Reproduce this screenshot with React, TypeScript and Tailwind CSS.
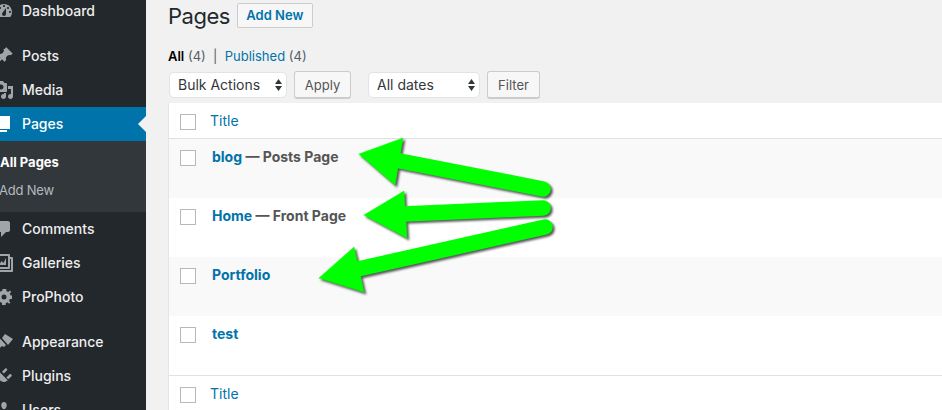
const font = "font-['Inter','Liberation_Sans',sans-serif]";

const Ico = ({ children }: { children: React.ReactNode }) => (
  <svg width="20" height="20" viewBox="0 0 20 20" className="absolute left-[-6px] top-1/2 -translate-y-1/2 fill-[#a0a5aa]">
    {children}
  </svg>
);

const icons: Record<string, React.ReactNode> = {
  Dashboard: <path fillRule="evenodd" d="M3.760 16h12.480c1.100-1.370 1.760-3.110 1.760-5 0-4.420-3.580-8-8-8s-8 3.580-8 8c0 1.890.660 3.630 1.760 5zM10 4c.550 0 1 .450 1 1s-.450 1-1 1-1-.450-1-1 .450-1 1-1zM6 6c.550 0 1 .450 1 1s-.450 1-1 1-1-.450-1-1 .450-1 1-1zm8 0c.550 0 1 .450 1 1s-.450 1-1 1-1-.450-1-1 .450-1 1-1zm-5.370 5.550L12 7v6c0 1.100-.900 2-2 2s-2-.900-2-2c0-.570.250-1.080.630-1.450zM4 10c.550 0 1 .450 1 1s-.450 1-1 1-1-.450-1-1 .450-1 1-1zm12 0c.550 0 1 .450 1 1s-.450 1-1 1-1-.450-1-1 .450-1 1-1z" />,
  Posts: <path d="M10.440 3.020l1.820-1.820 6.360 6.350-1.830 1.820c-1.050-.680-2.480-.570-3.410.360l-.750.750c-.920.930-1.040 2.350-.350 3.400l-1.830 1.820-2.410-2.410-2.800 2.790c-.420.420-3.380 2.710-3.800 2.290s1.860-3.390 2.280-3.810l2.790-2.790L3.100 9.360l1.830-1.820c1.050.690 2.480.570 3.400-.360l.750-.750c.930-.920 1.050-2.350.360-3.410z" />,
  Media: <path fillRule="evenodd" d="M13 11V4c0-.550-.450-1-1-1h-1.670L9 1H5L3.670 3H2c-.550 0-1 .450-1 1v7c0 .550.450 1 1 1h10c.550 0 1-.450 1-1zM7 4.500c1.380 0 2.500 1.120 2.500 2.500S8.380 9.500 7 9.500 4.500 8.380 4.500 7 5.620 4.500 7 4.500zM14 6h5v10.500c0 1.380-1.120 2.500-2.500 2.500S14 17.880 14 16.500s1.120-2.500 2.500-2.500c.170 0 .340.020.500.050V9h-3V6zm-4 8.050V13h2v3.500c0 1.380-1.120 2.500-2.500 2.500S7 17.880 7 16.500 8.120 14 9.500 14c.170 0 .340.020.500.050z" />,
  Pages: <path fill="#fff" d="M6 15V2h10v13H6zm-1 1h8v2H3V5h2v11z" />,
  Comments: <path d="M5 2h9c1.100 0 2 .900 2 2v7c0 1.100-.900 2-2 2h-2l-5 5v-5H5c-1.100 0-2-.900-2-2V4c0-1.100.900-2 2-2z" />,
  Galleries: <path fillRule="evenodd" d="M16 4h1.960c.570 0 1.040.470 1.040 1.040v12.920c0 .570-.470 1.040-1.040 1.040H5.040C4.470 19 4 18.530 4 17.960V16H2.040C1.470 16 1 15.530 1 14.960V2.040C1 1.470 1.470 1 2.040 1h12.920c.570 0 1.040.470 1.040 1.040V4zM3 14h11V3H3v11zm14 3V6h-1v8.960c0 .570-.470 1.040-1.040 1.040H6v1h11zM5 12l2.500-4 2 2L12 5v7z" />,
  ProPhoto: <path fillRule="evenodd" d="M18 12h-2.180c-.170.700-.470 1.350-.870 1.920l1.540 1.540-1.410 1.410-1.540-1.540c-.570.400-1.220.700-1.920.870V18H8v-2.180c-.700-.170-1.350-.470-1.920-.870l-1.540 1.540-1.410-1.410 1.540-1.540c-.400-.570-.700-1.220-.870-1.920H2V8h2.180c.170-.700.470-1.350.870-1.920L3.510 4.540l1.410-1.410 1.540 1.540c.570-.400 1.220-.700 1.920-.870V2h4v2.180c.700.170 1.350.470 1.920.870l1.540-1.540 1.410 1.410-1.540 1.540c.400.570.700 1.220.870 1.920H18v4zM10 7.500a2.500 2.500 0 1 0 0 5 2.500 2.500 0 0 0 0-5z" />,
  Appearance: <path d="M11 2l8 5-5 6-6-7zM6.500 7L12 13l-2 2-2-1-3 2.500-3-2 2-3-1-2z" />,
  Plugins: <path d="M13.110 4.360L9.870 7.600 8 5.730l3.240-3.240c.350-.340 1.050-.250 1.540.240.490.500.580 1.190.330 1.630zM5.870 6.260l7.870 7.870c-1.250 1.170-3.030 2.090-4.240 1.870-1.200-.230-2.180-.510-3.170-1.500L4 17l-1.500-1.500 2.500-2.500c-1-1-1.270-1.970-1.500-3.170-.220-1.210.200-2.400 1.870-3.570zM17.510 10.130l-3.240 3.240-1.870-1.870 3.240-3.240c.440-.250 1.130-.160 1.630.330.490.490.580 1.190.240 1.540z" />,
  Users: <path d="M10 9.250c-2.270 0-2.730-3.440-2.730-3.440C7 4.020 7.820 2 9.970 2c2.160 0 2.980 2.020 2.710 3.810 0 0-.410 3.440-2.680 3.440zm0 2.570L12.720 10c2.390 0 4.520 2.330 4.520 4.530v2.490s-3.650 1.130-7.240 1.130c-3.650 0-7.240-1.130-7.240-1.130v-2.490c0-2.250 1.940-4.530 4.430-4.530z" />,
};

function MenuItem({ label, active }: { label: string; active?: boolean }) {
  return (
    <div className={`relative h-[34px] pl-[22px] pb-[2px] flex items-center text-[14px] font-medium ${active ? "bg-[#0073aa] text-white" : "text-[#eeeeee]"}`}>
      <Ico>{icons[label]}</Ico>
      {label}
      {active && (
        <div className="absolute right-0 top-[9px] border-y-[8px] border-r-[8px] border-y-transparent border-r-[#f1f1f1]" />
      )}
    </div>
  );
}

function Sidebar() {
  return (
    <aside className="w-[146px] h-[410px] shrink-0 bg-[#23282d] overflow-hidden">
      <div className="-mt-[6px]">
        <MenuItem label="Dashboard" />
      </div>
      <div className="mt-[11px]">
        <MenuItem label="Posts" />
        <MenuItem label="Media" />
        <MenuItem label="Pages" active />
      </div>
      <div className="bg-[#32373c] h-[71px] pt-[8px] text-[13px]">
        <div className="h-[28px] flex items-center font-bold text-white">All Pages</div>
        <div className="h-[28px] flex items-center text-[#b4b9be] tracking-[-0.2px] -ml-px">Add New</div>
      </div>
      <div>
        <MenuItem label="Comments" />
        <MenuItem label="Galleries" />
        <MenuItem label="ProPhoto" />
      </div>
      <div className="mt-[11px]">
        <MenuItem label="Appearance" />
        <MenuItem label="Plugins" />
        <MenuItem label="Users" />
      </div>
    </aside>
  );
}

const Check = () => <span className="block w-4 h-4 mt-px bg-white border border-[#b4b9be] shrink-0" />;

function Select({ label, w }: { label: string; w: string }) {
  return (
    <div className={`${w} mt-px h-[26px] bg-white border border-[#e3e3e3] rounded-[5px] flex items-center justify-between pl-2 pr-[4px] pb-px text-[14px] text-[#32373c]`}>
      {label}
      <svg width="7" height="12" viewBox="0 0 7 12" className="fill-[#32373c]">
        <path d="M3.500 0L7 5H0zM3.500 12L0 7h7z" />
      </svg>
    </div>
  );
}

const Btn = ({ children, w }: { children: string; w: string }) => (
  <div className={`${w} h-[28px] pt-[2px] bg-[#f7f7f7] border border-[#cccccc] border-b-2 rounded-[3px] flex items-center justify-center text-[13px] text-[#555555]`}>
    {children}
  </div>
);

function Row({ striped, title, state }: { striped?: boolean; title: string; state?: string }) {
  return (
    <div className={`h-[59px] flex items-start pl-[11px] pt-[10px] ${striped ? "bg-[#f9f9f9]" : "bg-white"}`}>
      <Check />
      <div className="ml-[16px] text-[14px] font-bold leading-[16px] text-[#0073aa]">
        {title}
        {state && <span className="text-[#555555]"> — {state}</span>}
      </div>
    </div>
  );
}

const TitleCell = () => (
  <>
    <Check />
    <span className="ml-[14px] text-[14px] leading-[16px] text-[#0073aa]">Title</span>
  </>
);

function Arrows() {
  // the three hand drawn green arrows on top of the table
  return (
    <svg width="942" height="410" viewBox="0 0 942 410" className="absolute inset-0 pointer-events-none drop-shadow-[2px_2px_1px_rgba(0,0,0,0.65)]">
      <g fill="#00ff00" stroke="#00ff00" strokeLinecap="round" strokeLinejoin="round">
        <path d="M400 161L543 189" strokeWidth="15.500" />
        <path d="M359 154L403 138L395 185Z" strokeWidth="0.500" />
        <path d="M404 214L543 208" strokeWidth="15.500" />
        <path d="M364 215L404 191L407 238Z" strokeWidth="0.500" />
        <path d="M358 269L545 227" strokeWidth="15.500" />
        <path d="M319 278L354 247L364 292Z" strokeWidth="0.500" />
      </g>
    </svg>
  );
}

export default function App() {
  return (
    <div className={`relative w-[942px] h-[410px] overflow-hidden flex bg-[#f1f1f1] ${font}`}>
      <Sidebar />
      <main className="flex-1 pl-[23px] -ml-px text-[14px]">
        <div className="flex items-center h-[31px]">
          <h1 className="text-[22px] tracking-[-0.5px] mt-px leading-[31px] text-[#23282d]">Pages</h1>
          <div className="ml-[7px] h-[25px] w-[76px] flex items-center justify-center bg-[#f7f7f7] border border-[#cccccc] rounded-[2px] text-[13px] font-semibold text-[#0073aa]">
            Add New
          </div>
        </div>
        <div className="mt-[16px] h-[18px] leading-[18px] text-[13px] text-[#555d66] whitespace-pre">
          <b className="text-black font-semibold">All</b> (4)  |  <span className="text-[#0073aa]">Published</span> (4)
        </div>
        <div className="mt-[6px] flex items-start">
          <div className="ml-px"><Select label="Bulk Actions" w="w-[118px]" /></div>
          <div className="ml-[7px]"><Btn w="w-[57px]">Apply</Btn></div>
          <div className="ml-[17px]"><Select label="All dates" w="w-[112px]" /></div>
          <div className="ml-[7px]"><Btn w="w-[53px]">Filter</Btn></div>
        </div>
        <div className="mt-[4px] bg-white border-l border-[#e5e5e5] h-[320px]">
          <div className="h-[36px] flex items-start pt-[10px] pl-[11px] border-b border-[#e1e1e1]">
            <TitleCell />
          </div>
          <Row striped title="blog" state="Posts Page" />
          <Row title="Home" state="Front Page" />
          <Row striped title="Portfolio" />
          <Row title="test" />
          <div className="h-[36px] flex items-start pt-[10px] pl-[11px] border-t border-[#e1e1e1]">
            <TitleCell />
          </div>
        </div>
      </main>
      <Arrows />
    </div>
  );
}
